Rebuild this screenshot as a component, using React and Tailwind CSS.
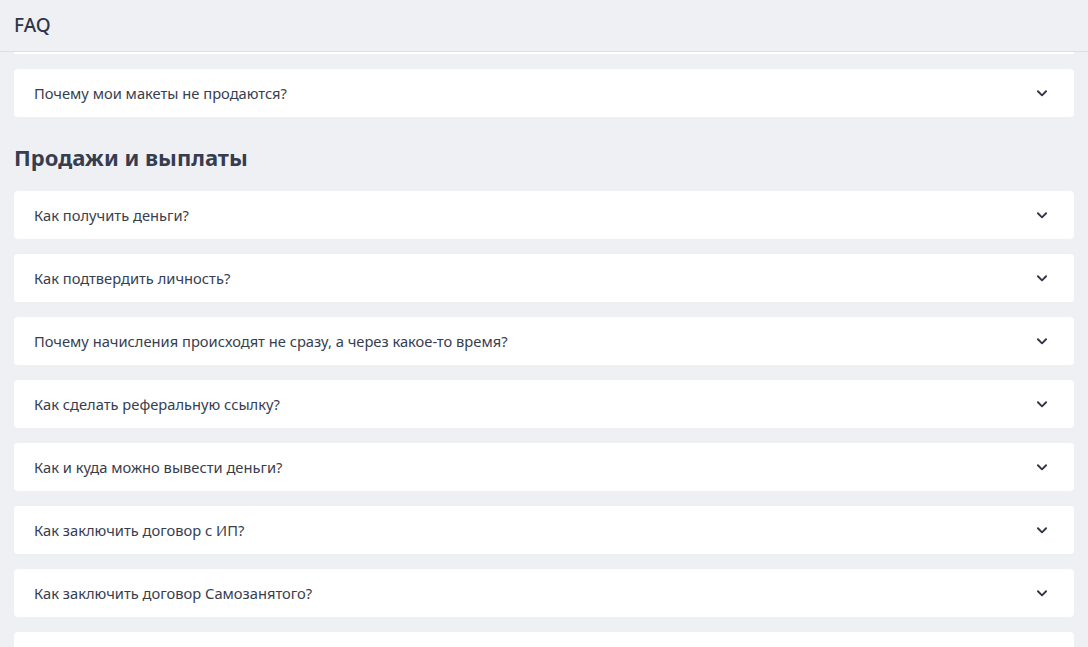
import React from "react";

const general = ["Почему мои макеты не продаются?"];

const payouts = [
  "Как получить деньги?",
  "Как подтвердить личность?",
  "Почему начисления происходят не сразу, а через какое-то время?",
  "Как сделать реферальную ссылку?",
  "Как и куда можно вывести деньги?",
  "Как заключить договор с ИП?",
  "Как заключить договор Самозанятого?",
];

function Chevron() {
  return (
    <svg width="14" height="14" viewBox="0 0 24 24" fill="none" stroke="#2f3544" strokeWidth="3.2" strokeLinecap="round" strokeLinejoin="round">
      <path d="M5 9l7 7 7-7" />
    </svg>
  );
}

function Item({ q }) {
  return (
    <div className="flex h-[48px] shrink-0 items-center justify-between rounded-[4px] bg-white pl-[20px] pr-[25px]">
      <span className="text-[14.7px] text-[#373e4f]">{q}</span>
      <Chevron />
    </div>
  );
}

export default function App() {
  return (
    <div
      className="h-[647px] w-[1088px] overflow-hidden bg-[#eff0f4]"
      style={{ fontFamily: '"Noto Sans", "Open Sans", sans-serif' }}
    >
      <header className="flex h-[52px] items-center border-b border-[#dcdee5] px-[14px]">
        <h1 className="text-[19px] font-medium text-[#2f3648]">FAQ</h1>
      </header>
      <div className="mx-[14px] h-[2px] bg-white" />
      <main className="flex flex-col px-[14px] pt-[15px]">
        <div className="flex flex-col gap-[15px]">
          {general.map((q) => (
            <Item key={q} q={q} />
          ))}
        </div>
        <h2 className="pb-[20px] pt-[26px] text-[22px] font-bold leading-[28px] text-[#363d50]">
          Продажи и выплаты
        </h2>
        <div className="flex flex-col gap-[15px]">
          {payouts.map((q) => (
            <Item key={q} q={q} />
          ))}
          {/* next entry, scrolled below the fold */}
          <div className="h-[48px] shrink-0 rounded-[4px] bg-white" />
        </div>
      </main>
    </div>
  );
}
